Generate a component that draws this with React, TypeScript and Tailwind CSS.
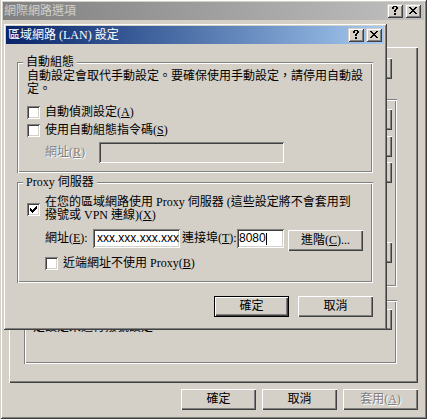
import React, { ReactNode } from "react";

// classic Win2k bevels
const frame =
  "shadow-[inset_1px_1px_0_#d4d0c8,inset_-1px_-1px_0_#404040,inset_2px_2px_0_#ffffff,inset_-2px_-2px_0_#808080]";
const raised =
  "shadow-[inset_1px_1px_0_#ffffff,inset_-1px_-1px_0_#404040,inset_-2px_-2px_0_#808080]";
const sunken =
  "shadow-[inset_1px_1px_0_#808080,inset_-1px_-1px_0_#ffffff,inset_2px_2px_0_#404040,inset_-2px_-2px_0_#d4d0c8]";
const etched =
  "shadow-[inset_1px_1px_0_#808080,inset_-1px_-1px_0_#ffffff,inset_2px_2px_0_#ffffff,inset_-2px_-2px_0_#808080]";
const grayed = "text-[#808080] [text-shadow:1px_1px_0_#ffffff]";

const CHECK = [
  "......X",
  ".....XX",
  "X...XXX",
  "XX.XXX.",
  "XXXXX..",
  ".XXX...",
  "..X....",
];

const HELP = [
  ".XXXX.",
  "XX..XX",
  "XX..XX",
  "...XX.",
  "..XX..",
  "..XX..",
  "......",
  "..XX..",
  "..XX..",
];

const CLOSE = [
  "XX....XX",
  ".XX..XX.",
  "..XXXX..",
  "...XX...",
  "..XXXX..",
  ".XX..XX.",
  "XX....XX",
];

const Pixels = ({ rows }: { rows: string[] }) => (
  <svg
    width={rows[0].length}
    height={rows.length}
    shapeRendering="crispEdges"
    className="block"
  >
    {rows.flatMap((r, y) =>
      r
        .split("")
        .map((c, x) =>
          c === "X" ? (
            <rect key={`${x}-${y}`} x={x} y={y} width={1} height={1} fill="#000" />
          ) : null
        )
    )}
  </svg>
);

const CapButton = ({ glyph }: { glyph: string[] }) => (
  <div
    className={`w-[16px] h-[14px] bg-[#d4d0c8] ${frame} flex items-center justify-center pb-px`}
  >
    <Pixels rows={glyph} />
  </div>
);

const Btn = ({
  children,
  className = "",
  def = false,
  disabled = false,
}: {
  children?: ReactNode;
  className?: string;
  def?: boolean;
  disabled?: boolean;
}) => (
  <div
    className={`h-[21px] shrink-0 flex items-center justify-center bg-[#d4d0c8] whitespace-nowrap ${
      def ? "border border-black" : ""
    } ${raised} ${disabled ? grayed : ""} ${className}`}
  >
    {children}
  </div>
);

const Check = ({ checked = false }: { checked?: boolean }) => (
  <div
    className={`w-[13px] h-[13px] shrink-0 bg-white ${sunken} flex items-center justify-center`}
  >
    {checked && <Pixels rows={CHECK} />}
  </div>
);

const CheckRow = ({
  label,
  checked,
  className = "",
}: {
  label: ReactNode;
  checked?: boolean;
  className?: string;
}) => (
  <div className={`flex items-center gap-[5px] ${className}`}>
    <Check checked={checked} />
    <span className="whitespace-nowrap">{label}</span>
  </div>
);

const Group = ({
  label,
  className = "",
  children,
}: {
  label?: ReactNode;
  className?: string;
  children?: ReactNode;
}) => (
  <div className={`relative shrink-0 ${etched} ${className}`}>
    {label && (
      <span className="absolute left-[6px] -top-[6px] px-[3px] bg-[#d4d0c8] whitespace-nowrap">
        {label}
      </span>
    )}
    {children}
  </div>
);

const LanDialog = () => (
  <div
    className={`absolute left-[3px] top-[23px] w-[384px] h-[307px] p-[3px] bg-[#d4d0c8] ${frame} flex flex-col`}
  >
    <div className="h-[18px] shrink-0 flex items-center bg-linear-to-r from-[#0a246a] to-[#a6caf0] pl-[2px] pr-[2px]">
      <span className="flex-1 text-white leading-[18px] whitespace-nowrap">
        區域網路 (LAN) 設定
      </span>
      <div className="flex gap-[2px]">
        <CapButton glyph={HELP} />
        <CapButton glyph={CLOSE} />
      </div>
    </div>

    <div className="flex flex-col px-[11px] pt-[18px]">
      <Group label="自動組態" className="h-[111px]">
        <div className="flex flex-col pl-[10px] pt-[8px]">
          <p className="whitespace-nowrap">
            自動設定會取代手動設定。要確保使用手動設定，請停用自動設
            <br />
            定。
          </p>
          <CheckRow
            className="mt-[10px]"
            label={
              <>
                自動偵測設定(<u>A</u>)
              </>
            }
          />
          <CheckRow
            className="mt-[5px]"
            label={
              <>
                使用自動組態指令碼(<u>S</u>)
              </>
            }
          />
          <div className="mt-[5px] pl-[18px] flex items-center">
            <span className={`w-[54px] whitespace-nowrap ${grayed}`}>
              網址(<u>R</u>)
            </span>
            <div className={`w-[185px] h-[21px] bg-[#d4d0c8] ${sunken}`} />
          </div>
        </div>
      </Group>

      <Group label="Proxy 伺服器" className="mt-[9px] h-[101px]">
        <div className="flex flex-col pl-[10px] pt-[14px]">
          <div className="flex items-center gap-[5px]">
            <Check checked />
            <span className="whitespace-nowrap">
              在您的區域網路使用 Proxy 伺服器 (這些設定將不會套用到
              <br />
              撥號或 VPN 連線)(<u>X</u>)
            </span>
          </div>
          <div className="mt-[7px] pl-[18px] flex items-start">
            <span className="w-[48px] mt-[3px] whitespace-nowrap">
              網址(<u>E</u>):
            </span>
            <div
              className={`w-[87px] h-[19px] bg-white ${sunken} overflow-hidden flex items-center pl-[4px] font-['Liberation_Sans',sans-serif] whitespace-nowrap`}
            >
              xxx.xxx.xxx.xxx
            </div>
            <span className="ml-[2px] w-[55px] mt-[3px] whitespace-nowrap">
              連接埠(<u>T</u>):
            </span>
            <div
              className={`w-[47px] h-[19px] bg-white ${sunken} flex items-center pl-[2px] font-['Liberation_Sans',sans-serif]`}
            >
              8080
              <span className="w-px h-[12px] bg-black" />
            </div>
            <Btn className="ml-[4px] mt-px w-[75px]">
              進階(<u>C</u>)...
            </Btn>
          </div>
          <div className="mt-[6px] pl-[18px]">
            <CheckRow
              label={
                <>
                  近端網址不使用 Proxy(<u>B</u>)
                </>
              }
            />
          </div>
        </div>
      </Group>

      <div className="mt-[13px] flex justify-end gap-[9px]">
        <Btn def className="w-[75px]">
          確定
        </Btn>
        <Btn className="w-[75px]">取消</Btn>
      </div>
    </div>
  </div>
);

export default function App() {
  return (
    <div className="w-[427px] h-[419px] overflow-hidden relative bg-[#d4d0c8] text-black text-[12px] leading-[13px] font-['Liberation_Serif','Noto_Sans_CJK_TC',serif]">
      {/* Internet options window, mostly covered by the LAN dialog */}
      <div className={`-mt-px h-[420px] p-[3px] ${frame} flex flex-col`}>
        <div className="h-[18px] shrink-0 flex items-center bg-linear-to-r from-[#808080] to-[#c0c0c0] pl-[1px] pr-[3px]">
          <span className="flex-1 text-[#d4d0c8] leading-[18px] whitespace-nowrap">
            網際網路選項
          </span>
          <div className="flex gap-[2px]">
            <CapButton glyph={HELP} />
            <CapButton glyph={CLOSE} />
          </div>
        </div>

        <div
          className={`ml-[6px] mt-[27px] w-[409px] h-[336px] shrink-0 ${raised} flex flex-col pt-[11px] pl-[15px] pr-[21px]`}
        >
          <div className="flex justify-end pr-[5px]">
            <Btn className="w-[75px]" />
          </div>

          <Group className="mt-[20px] h-[188px]">
            <div className="flex pt-[10px] pl-[9px] pr-[5px] gap-[8px]">
              <div className={`flex-1 h-[90px] bg-white ${sunken}`} />
              <div className="flex flex-col">
                <Btn className="w-[75px]" />
                <Btn className="mt-[6px] w-[75px]" />
                <Btn className="mt-[5px] w-[75px]" />
                <Btn className="mt-[59px] w-[75px]" />
              </div>
            </div>
          </Group>

          <Group className="mt-[13px] h-[64px]">
            <div className="flex pt-[8px] pl-[9px] pr-[5px]">
              <p className="flex-1 whitespace-nowrap pt-[13px]">
                定設定來進行撥號設定
              </p>
              <Btn className="mt-px w-[100px]" />
            </div>
          </Group>
        </div>

        <div className="mt-[6px] pr-[6px] flex justify-end gap-[6px]">
          <Btn className="w-[75px]">確定</Btn>
          <Btn className="w-[75px]">取消</Btn>
          <Btn disabled className="w-[75px]">
            套用(<u>A</u>)
          </Btn>
        </div>
      </div>

      <LanDialog />
    </div>
  );
}
